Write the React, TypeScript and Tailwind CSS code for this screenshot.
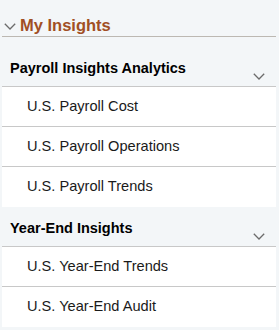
const sections = [
  {
    title: "Payroll Insights Analytics",
    items: ["U.S. Payroll Cost", "U.S. Payroll Operations", "U.S. Payroll Trends"],
    height: "h-[50px]",
  },
  {
    title: "Year-End Insights",
    items: ["U.S. Year-End Trends", "U.S. Year-End Audit"],
    height: "h-[40px]",
  },
];

const Chevron = ({ className }: { className?: string }) => (
  <svg viewBox="0 0 12 7" className={className} fill="none" stroke="#6b6b6b" strokeWidth={1.3}>
    <polyline points="0.8,0.8 6,6 11.2,0.8" />
  </svg>
);

export default function App() {
  return (
    <div className="h-[330px] w-[279px] bg-[#f3f6f8] pl-[2px] pr-[3px] font-['Liberation_Sans',Arial,sans-serif]">
      <div className="flex h-[37px] items-center border-b border-[#bcb8b2] pt-[14px]">
        <Chevron className="ml-[2px] mt-[2px] h-[7px] w-[12px] shrink-0" />
        <span className="ml-[4px] text-[16.5px] font-bold leading-[18px] text-[#a14f24]">My Insights</span>
      </div>
      {sections.map((s) => (
        <div key={s.title}>
          <div className={`flex ${s.height} items-end border-b border-[#c8c8c8] bg-[#f3f6f8]`}>
            <span className="mb-[10px] ml-[8px] flex-1 text-[14.5px] font-bold leading-[16px] text-black">
              {s.title}
            </span>
            <Chevron className="mb-[6px] mr-[11px] h-[7px] w-[12px] shrink-0" />
          </div>
          {s.items.map((it, i) => (
            <div
              key={it}
              className={`flex h-[40px] items-center bg-white pl-[25px] text-[14.6px] text-[#1a1a1a] ${
                i < s.items.length - 1 ? "border-b border-[#c8c8c8]" : ""
              }`}
            >
              {it}
            </div>
          ))}
        </div>
      ))}
    </div>
  );
}
